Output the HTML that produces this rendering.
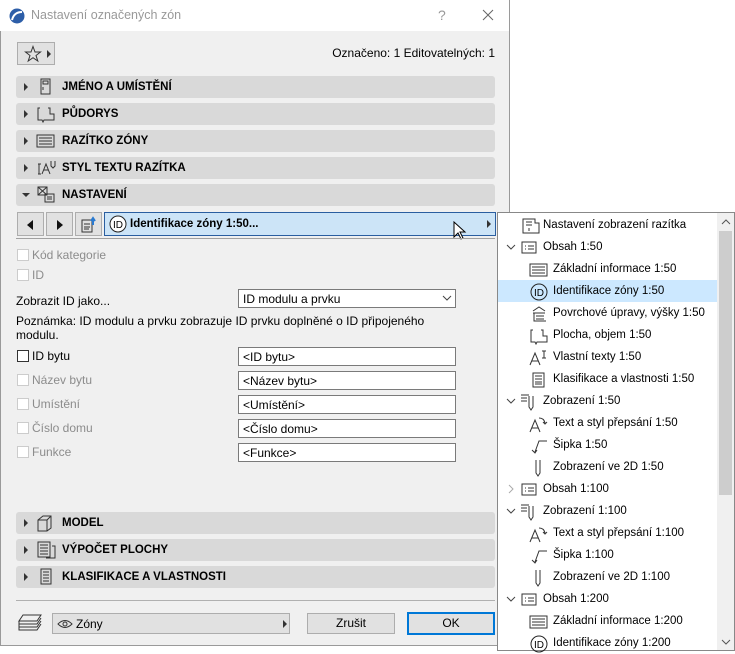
<!DOCTYPE html>
<html><head><meta charset="utf-8">
<style>
*{box-sizing:border-box;margin:0;padding:0}
body{width:735px;height:651px;background:#fff;position:relative;overflow:hidden;font-family:"Liberation Sans",sans-serif;font-size:12px;color:#000}
.a{position:absolute}
#dlg{left:0;top:0;width:510px;height:646px;background:#f0f0f0;border:1px solid #9a9a9a;border-top:none}
#title{left:0;top:0;width:509px;height:31px;background:#fff}
.sec{position:absolute;left:16px;width:479px;height:22px;background:#d9d9d9;border-radius:3px}
.sec .tri{position:absolute;left:8px;top:7px;width:0;height:0;border-left:4px solid #333;border-top:4px solid transparent;border-bottom:4px solid transparent}
.sec .lbl{position:absolute;left:46px;top:5px;font-weight:bold;font-size:11.5px}
.sec svg{position:absolute;left:20px;top:2px}
.btn{position:absolute;background:#e1e1e1;border:1px solid #adadad}
.cb{position:absolute;left:17px;width:12px;height:12px;background:#fff;border:1px solid #ccc}
.cl{position:absolute;left:32px;color:#8c8c8c}
.fld{position:absolute;left:238px;width:218px;height:19px;background:#fff;border:1px solid #7a7a7a;padding:2px 4px}
#pop{left:497px;top:212px;width:238px;height:439px;background:#fff;border:1px solid #888;font-size:11.5px}
.r{position:absolute;left:0;width:219px;height:22px;line-height:22px;white-space:nowrap}
.r svg{position:absolute;top:3px}
.r svg.ch{left:8px;top:8px}
</style></head><body>
<div id="dlg" class="a"></div>
<div id="title" class="a">
 <svg class="a" style="left:9px;top:8px" width="16" height="16"><circle cx="8" cy="8" r="7.5" fill="#2d5ea8"/><path d="M3 12 Q5 4 13 4" stroke="#fff" stroke-width="2" fill="none"/></svg>
 <div class="a" style="left:31px;top:8px;color:#999;font-size:12.5px">Nastavení označených zón</div>
 <div class="a" style="left:438px;top:7px;color:#999;font-size:14px">?</div>
 <svg class="a" style="left:482px;top:9px" width="12" height="12"><path d="M1 1l10 10M11 1L1 11" stroke="#666" stroke-width="1"/></svg>
</div>
<div class="btn" style="left:17px;top:42px;width:38px;height:23px">
 <svg class="a" style="left:6px;top:2px" width="18" height="18"><path d="M9 1.5 L11 7 L16.5 7 L12 10.5 L13.8 16 L9 12.7 L4.2 16 L6 10.5 L1.5 7 L7 7Z" fill="none" stroke="#333"/></svg>
 <div class="a" style="left:29px;top:7px;border-left:4px solid #333;border-top:4px solid transparent;border-bottom:4px solid transparent"></div>
</div>
<div class="a" style="right:240px;top:46px">Označeno: 1 Editovatelných: 1</div>

<div class="sec" style="top:76px"><div class="tri"></div><svg width="18" height="18"><rect x="5" y="1" width="9" height="15" fill="none" stroke="#333"/><rect x="7" y="3" width="5" height="3" fill="none" stroke="#333"/><path d="M7 9v3" stroke="#333"/></svg><div class="lbl">JMÉNO A UMÍSTĚNÍ</div></div>
<div class="sec" style="top:103px"><div class="tri"></div><svg width="20" height="18"><path d="M4 3H2v12h4l1 2 1-2h10V9h-4V3h-2" fill="none" stroke="#333"/></svg><div class="lbl">PŮDORYS</div></div>
<div class="sec" style="top:130px"><div class="tri"></div><svg width="20" height="18"><rect x="1" y="3" width="17" height="12" fill="none" stroke="#333"/><path d="M3 6h13M3 9h13M3 12h13" stroke="#333"/></svg><div class="lbl">RAZÍTKO ZÓNY</div></div>
<div class="sec" style="top:157px"><div class="tri"></div><svg width="22" height="18"><path d="M2 5h3M3 5v10M2 15h3M6 15l4-10 4 10M8 11h4M15 2v5l2 2 2-2V2" fill="none" stroke="#333"/></svg><div class="lbl">STYL TEXTU RAZÍTKA</div></div>
<div class="sec" style="top:184px"><div class="tri" style="left:6px;top:9px;border-left:4px solid transparent;border-right:4px solid transparent;border-top:4px solid #333;border-bottom:none"></div><svg width="20" height="18"><rect x="2" y="1" width="9" height="8" fill="none" stroke="#333"/><path d="M2 1l9 8M11 1l-9 8" stroke="#333"/><rect x="9" y="8" width="9" height="8" fill="none" stroke="#333"/><path d="M11 11h5M11 13h5" stroke="#333"/></svg><div class="lbl">NASTAVENÍ</div></div>

<div class="btn" style="left:17px;top:212px;width:27px;height:24px"><div class="a" style="left:9px;top:7px;border-right:6px solid #111;border-top:5px solid transparent;border-bottom:5px solid transparent"></div></div>
<div class="btn" style="left:46px;top:212px;width:27px;height:24px"><div class="a" style="left:10px;top:7px;border-left:6px solid #111;border-top:5px solid transparent;border-bottom:5px solid transparent"></div></div>
<div class="btn" style="left:75px;top:212px;width:27px;height:24px"><svg class="a" style="left:4px;top:3px" width="18" height="18"><rect x="2" y="4" width="10" height="12" fill="none" stroke="#333"/><path d="M4 8h6M4 11h6M4 13h5" stroke="#333"/><path d="M13 9V3M11 5l2-3 2 3" stroke="#2a7ad0" stroke-width="2" fill="none"/></svg></div>
<div class="a" style="left:104px;top:212px;width:392px;height:24px;background:#cce4f7;border:1px solid #2a5ea0">
 <svg class="a" style="left:4px;top:2px" width="18" height="18"><circle cx="9" cy="9" r="8" fill="#fff" stroke="#222"/><text x="4" y="13" font-size="10" font-family="Liberation Sans">ID</text></svg>
 <div class="a" style="left:25px;top:5px;font-weight:bold;font-size:11.5px">Identifikace zóny 1:50...</div>
 <div class="a" style="left:382px;top:7px;border-left:4px solid #333;border-top:4px solid transparent;border-bottom:4px solid transparent"></div>
</div>
<svg class="a" style="left:453px;top:221px" width="14" height="20"><path d="M1 1v15l4-4 3 6 2-1-3-6h5z" fill="#fff" stroke="#000"/></svg>
<div class="a" style="left:16px;top:238px;width:479px;height:1px;background:#a0a0a0"></div>

<div class="cb" style="top:249px"></div><div class="cl" style="top:248px">Kód kategorie</div>
<div class="cb" style="top:269px"></div><div class="cl" style="top:268px">ID</div>
<div class="a" style="left:16px;top:294px">Zobrazit ID jako...</div>
<div class="a" style="left:238px;top:289px;width:218px;height:19px;background:#fff;border:1px solid #7a7a7a;padding:2px 4px">ID modulu a prvku<svg class="a" style="left:203px;top:5px" width="10" height="7"><path d="M1 1l4 4 4-4" fill="none" stroke="#444"/></svg></div>
<div class="a" style="left:16px;top:314px;line-height:14px;width:420px">Poznámka: ID modulu a prvku zobrazuje ID prvku doplněné o ID připojeného modulu.</div>

<div class="cb" style="top:350px;border-color:#333"></div><div class="cl" style="top:349px;color:#000">ID bytu</div><div class="fld" style="top:347px">&lt;ID bytu&gt;</div>
<div class="cb" style="top:374px"></div><div class="cl" style="top:373px">Název bytu</div><div class="fld" style="top:371px">&lt;Název bytu&gt;</div>
<div class="cb" style="top:398px"></div><div class="cl" style="top:397px">Umístění</div><div class="fld" style="top:395px">&lt;Umístění&gt;</div>
<div class="cb" style="top:422px"></div><div class="cl" style="top:421px">Číslo domu</div><div class="fld" style="top:419px">&lt;Číslo domu&gt;</div>
<div class="cb" style="top:446px"></div><div class="cl" style="top:445px">Funkce</div><div class="fld" style="top:443px">&lt;Funkce&gt;</div>

<div class="sec" style="top:512px"><div class="tri"></div><svg width="20" height="18"><path d="M2 6l5-4h8v12l-4 3H2z M2 6h9v11 M11 6l4-4" fill="none" stroke="#333"/></svg><div class="lbl">MODEL</div></div>
<div class="sec" style="top:539px"><div class="tri"></div><svg width="22" height="18"><rect x="2" y="1" width="12" height="15" fill="none" stroke="#333"/><path d="M4 4h8M4 7h8M4 10h8M4 13h8M16 5h3v12h-9" fill="none" stroke="#333"/></svg><div class="lbl">VÝPOČET PLOCHY</div></div>
<div class="sec" style="top:566px"><div class="tri"></div><svg width="20" height="18"><rect x="5" y="1" width="10" height="15" fill="none" stroke="#333"/><path d="M7 4h6M7 7h6M7 10h6M7 13h6" stroke="#333"/></svg><div class="lbl">KLASIFIKACE A VLASTNOSTI</div></div>
<div class="a" style="left:16px;top:600px;width:479px;height:1px;background:#b0b0b0"></div>

<svg class="a" style="left:17px;top:613px" width="26" height="20"><path d="M6 2h18l-4 6H2z M2 8v3h18l4-6M2 11v3h18l4-6M2 14v3h18l4-6" fill="none" stroke="#333"/></svg>
<div class="btn" style="left:52px;top:613px;width:238px;height:21px"><svg class="a" style="left:4px;top:4px" width="16" height="12"><path d="M1 6Q8 -1 15 6Q8 13 1 6z" fill="none" stroke="#333"/><circle cx="8" cy="6" r="2" fill="none" stroke="#333"/></svg><div class="a" style="left:23px;top:3px">Zóny</div><div class="a" style="left:230px;top:6px;border-left:4px solid #333;border-top:4px solid transparent;border-bottom:4px solid transparent"></div></div>
<div class="btn" style="left:307px;top:613px;width:88px;height:21px;text-align:center;line-height:19px">Zrušit</div>
<div class="btn" style="left:407px;top:612px;width:88px;height:23px;text-align:center;line-height:19px;border:2px solid #0078d7">OK</div>

<div id="pop" class="a">
 <div class="r" style="top:1px"><svg style="left:23px" width="20" height="18"><path d="M2 2h12v4h4v10H2z" fill="none" stroke="#333"/><path d="M5 5h6M5 8h6M8 11v3" stroke="#333"/></svg><span class="a" style="left:45px">Nastavení zobrazení razítka</span></div>
 <div class="r" style="top:23px"><svg class="ch" width="10" height="7"><path d="M1 1l4 4 4-4" fill="none" stroke="#444"/></svg><svg style="left:22px" width="18" height="18"><rect x="2" y="3" width="14" height="11" fill="none" stroke="#333"/><path d="M5 7h1M5 10h1M8 7h6M8 10h6" stroke="#333"/></svg><span class="a" style="left:45px">Obsah 1:50</span></div>
 <div class="r" style="top:45px"><svg style="left:31px" width="20" height="18"><rect x="1" y="3" width="17" height="12" fill="none" stroke="#333"/><path d="M3 6h13M3 9h13M3 12h13" stroke="#333"/></svg><span class="a" style="left:55px">Základní informace 1:50</span></div>
 <div class="r" style="top:67px;background:#cce8ff"><svg style="left:32px" width="18" height="18"><circle cx="9" cy="9" r="8" fill="none" stroke="#222"/><text x="4" y="13" font-size="10" font-family="Liberation Sans">ID</text></svg><span class="a" style="left:55px">Identifikace zóny 1:50</span></div>
 <div class="r" style="top:89px"><svg style="left:32px" width="18" height="18"><path d="M3 6l6-4 6 4M3 8h12M4 8v8h12M6 11h8M6 14h8" fill="none" stroke="#333"/></svg><span class="a" style="left:55px">Povrchové úpravy, výšky 1:50</span></div>
 <div class="r" style="top:111px"><svg style="left:31px" width="20" height="18"><path d="M4 3H2v12h4l1 2 1-2h10V9h-4V3h-2" fill="none" stroke="#333"/></svg><span class="a" style="left:55px">Plocha, objem 1:50</span></div>
 <div class="r" style="top:133px"><svg style="left:31px" width="20" height="18"><path d="M1 16l5-12 5 12M3 12h6M13 2h4M15 2v7M13 9h4" fill="none" stroke="#333"/></svg><span class="a" style="left:55px">Vlastní texty 1:50</span></div>
 <div class="r" style="top:155px"><svg style="left:32px" width="18" height="18"><rect x="3" y="2" width="11" height="14" fill="none" stroke="#333"/><path d="M5 5h7M5 8h7M5 11h7M5 13h7" stroke="#333"/></svg><span class="a" style="left:55px">Klasifikace a vlastnosti 1:50</span></div>
 <div class="r" style="top:177px"><svg class="ch" width="10" height="7"><path d="M1 1l4 4 4-4" fill="none" stroke="#444"/></svg><svg style="left:22px" width="20" height="18"><path d="M1 2h8M1 5h6M1 8h6M9 3v11l2 3 2-3V3" fill="none" stroke="#333"/></svg><span class="a" style="left:45px">Zobrazení 1:50</span></div>
 <div class="r" style="top:199px"><svg style="left:31px" width="20" height="18"><path d="M1 17l5-12 5 12M3 13h6M10 3q5 0 6 5M14 7l2 2 2-2" fill="none" stroke="#333"/></svg><span class="a" style="left:55px">Text a styl přepsání 1:50</span></div>
 <div class="r" style="top:221px"><svg style="left:31px" width="20" height="18"><path d="M18 4H10L6 15M3 13l3 3 2-3" fill="none" stroke="#333"/></svg><span class="a" style="left:55px">Šipka 1:50</span></div>
 <div class="r" style="top:243px"><svg style="left:31px" width="20" height="18"><path d="M7 1v13l2 3 2-3V1" fill="none" stroke="#333"/></svg><span class="a" style="left:55px">Zobrazení ve 2D 1:50</span></div>
 <div class="r" style="top:265px"><svg class="ch" style="left:10px;top:6px" width="7" height="10"><path d="M1 1l4 4-4 4" fill="none" stroke="#aaa"/></svg><svg style="left:22px" width="18" height="18"><rect x="2" y="3" width="14" height="11" fill="none" stroke="#333"/><path d="M5 7h1M5 10h1M8 7h6M8 10h6" stroke="#333"/></svg><span class="a" style="left:45px">Obsah 1:100</span></div>
 <div class="r" style="top:287px"><svg class="ch" width="10" height="7"><path d="M1 1l4 4 4-4" fill="none" stroke="#444"/></svg><svg style="left:22px" width="20" height="18"><path d="M1 2h8M1 5h6M1 8h6M9 3v11l2 3 2-3V3" fill="none" stroke="#333"/></svg><span class="a" style="left:45px">Zobrazení 1:100</span></div>
 <div class="r" style="top:309px"><svg style="left:31px" width="20" height="18"><path d="M1 17l5-12 5 12M3 13h6M10 3q5 0 6 5M14 7l2 2 2-2" fill="none" stroke="#333"/></svg><span class="a" style="left:55px">Text a styl přepsání 1:100</span></div>
 <div class="r" style="top:331px"><svg style="left:31px" width="20" height="18"><path d="M18 4H10L6 15M3 13l3 3 2-3" fill="none" stroke="#333"/></svg><span class="a" style="left:55px">Šipka 1:100</span></div>
 <div class="r" style="top:353px"><svg style="left:31px" width="20" height="18"><path d="M7 1v13l2 3 2-3V1" fill="none" stroke="#333"/></svg><span class="a" style="left:55px">Zobrazení ve 2D 1:100</span></div>
 <div class="r" style="top:375px"><svg class="ch" width="10" height="7"><path d="M1 1l4 4 4-4" fill="none" stroke="#444"/></svg><svg style="left:22px" width="18" height="18"><rect x="2" y="3" width="14" height="11" fill="none" stroke="#333"/><path d="M5 7h1M5 10h1M8 7h6M8 10h6" stroke="#333"/></svg><span class="a" style="left:45px">Obsah 1:200</span></div>
 <div class="r" style="top:397px"><svg style="left:31px" width="20" height="18"><rect x="1" y="3" width="17" height="12" fill="none" stroke="#333"/><path d="M3 6h13M3 9h13M3 12h13" stroke="#333"/></svg><span class="a" style="left:55px">Základní informace 1:200</span></div>
 <div class="r" style="top:419px"><svg style="left:32px" width="18" height="18"><circle cx="9" cy="9" r="8" fill="none" stroke="#222"/><text x="4" y="13" font-size="10" font-family="Liberation Sans">ID</text></svg><span class="a" style="left:55px">Identifikace zóny 1:200</span></div>
 <div class="a" style="left:219px;top:0;width:17px;height:437px;background:#f0f0f0"></div>
 <div class="a" style="left:221px;top:18px;width:13px;height:264px;background:#cdcdcd"></div>
 <svg class="a" style="left:223px;top:5px" width="10" height="7"><path d="M1 6l4-4 4 4" fill="none" stroke="#555"/></svg>
 <svg class="a" style="left:223px;top:426px" width="10" height="7"><path d="M1 1l4 4 4-4" fill="none" stroke="#555"/></svg>
</div>
</body></html>
